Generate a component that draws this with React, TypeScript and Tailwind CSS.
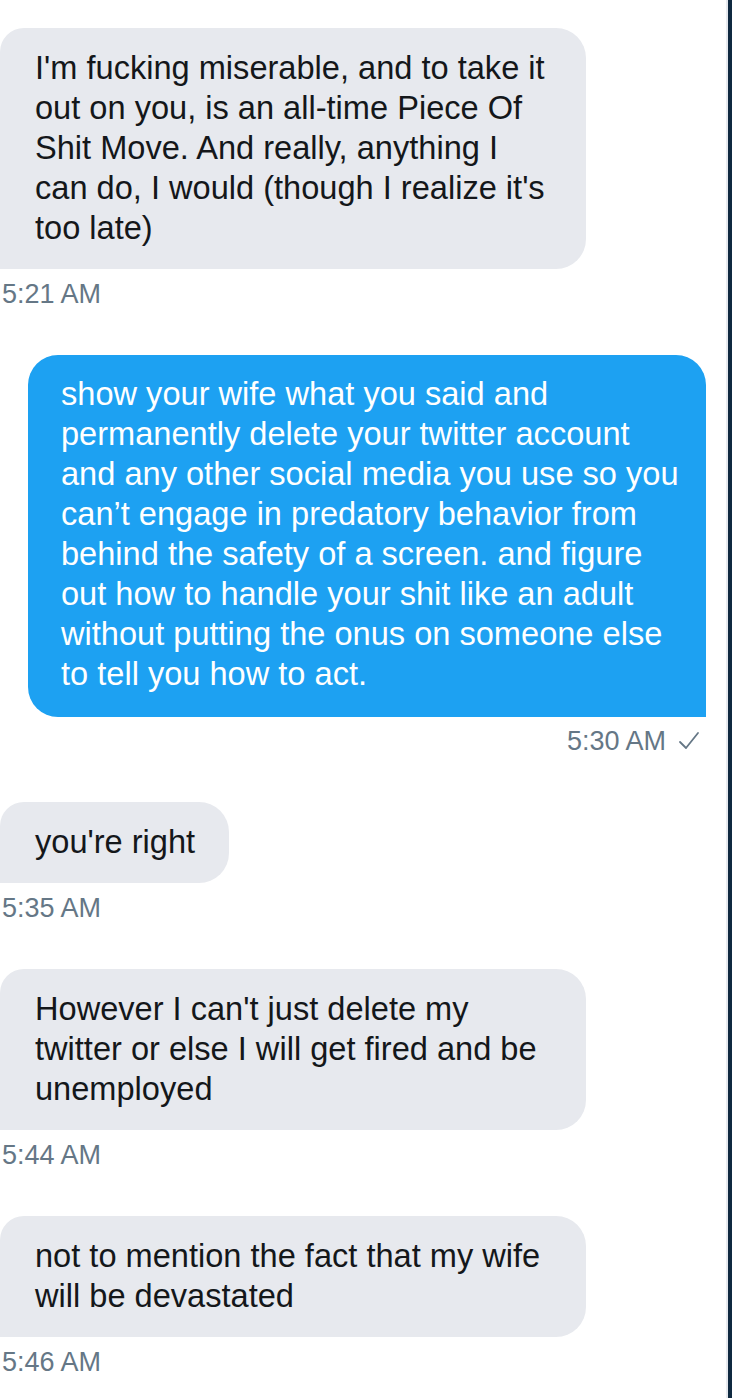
type Msg = {
  from: "them" | "me";
  lines: string[];
  time: string;
  wide?: boolean;
};

const messages: Msg[] = [
  {
    from: "them",
    wide: true,
    lines: [
      "I'm fucking miserable, and to take it",
      "out on you, is an all-time Piece Of",
      "Shit Move. And really, anything I",
      "can do, I would (though I realize it's",
      "too late)",
    ],
    time: "5:21 AM",
  },
  {
    from: "me",
    lines: [
      "show your wife what you said and",
      "permanently delete your twitter account",
      "and any other social media you use so you",
      "can\u2019t engage in predatory behavior from",
      "behind the safety of a screen. and figure",
      "out how to handle your shit like an adult",
      "without putting the onus on someone else",
      "to tell you how to act.",
    ],
    time: "5:30 AM",
  },
  { from: "them", lines: ["you're right"], time: "5:35 AM" },
  {
    from: "them",
    wide: true,
    lines: [
      "However I can't just delete my",
      "twitter or else I will get fired and be",
      "unemployed",
    ],
    time: "5:44 AM",
  },
  {
    from: "them",
    wide: true,
    lines: ["not to mention the fact that my wife", "will be devastated"],
    time: "5:46 AM",
  },
];

function Check() {
  return (
    <svg width="22" height="20" viewBox="0 0 22 20" fill="none" className="ml-[12px]">
      <polyline points="2,11 8,17 20,2" stroke="#657786" strokeWidth="1.8" strokeLinecap="round" strokeLinejoin="round" />
    </svg>
  );
}

function Received({ msg }: { msg: Msg }) {
  return (
    <div className="flex flex-col items-start">
      <div
        className={
          "bg-[#e7e9ee] text-[#14171a] text-[32.6px] leading-[40px] rounded-tl-[24px] rounded-tr-[30px] rounded-br-[30px] pl-[35px] pr-[34px] pt-5 pb-[21px] " +
          (msg.wide ? "w-[586px]" : "")
        }
      >
        {msg.lines.map((l, i) => (
          <div key={i} className="whitespace-nowrap">{l}</div>
        ))}
      </div>
      <div className="mt-[9px] pl-[2px] text-[27px] leading-[32px] text-[#657786]">{msg.time}</div>
    </div>
  );
}

function Sent({ msg }: { msg: Msg }) {
  return (
    <div className="flex flex-col items-end pr-[20px]">
      <div className="w-[678px] bg-[#1da1f2] text-white text-[32.6px] leading-[40px] rounded-tl-[30px] rounded-tr-[30px] rounded-bl-[30px] pl-[33px] pt-[19px] pb-[23px]">
        {msg.lines.map((l, i) => (
          <div key={i} className="whitespace-nowrap">{l}</div>
        ))}
      </div>
      <div className="mt-[8px] flex items-center pr-[6px] text-[27px] leading-[32px] text-[#657786]">
        {msg.time}
        <Check />
      </div>
    </div>
  );
}

export default function App() {
  return (
    <div className="flex min-h-screen bg-white font-['Liberation_Sans',Arial,sans-serif]">
      <div className="flex-1 pt-[28px]">
        <div className="flex flex-col gap-[45px]">
          {messages.map((m, i) =>
            m.from === "me" ? <Sent key={i} msg={m} /> : <Received key={i} msg={m} />
          )}
        </div>
      </div>
      <div className="w-[2px] bg-[#e6e9ee]" />
      <div className="w-[4px] bg-[#0f2940]" />
    </div>
  );
}
